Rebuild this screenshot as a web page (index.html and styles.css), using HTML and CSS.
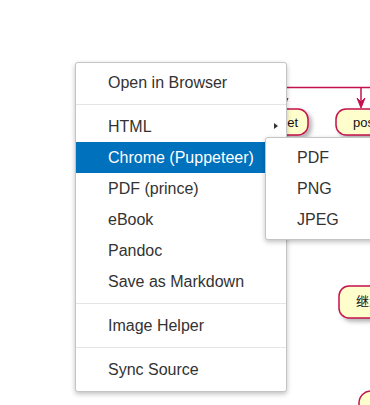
FILE: index.html
```html
<!DOCTYPE html>
<html lang="en">
<head>
    <meta charset="UTF-8">
    <title>Context Menu</title>
    <link rel="stylesheet" href="styles.css">
</head>
<body>
    <div class="canvas">
        <!-- diagram behind the menu -->
        <svg class="diagram" width="370" height="405" viewBox="0 0 370 405">
            <defs>
                <filter id="shadow" x="-20%" y="-20%" width="140%" height="160%">
                    <feDropShadow dx="3" dy="3" stdDeviation="2" flood-color="#000" flood-opacity="0.3"/>
                </filter>
            </defs>
            <line x1="200" y1="87.5" x2="370" y2="87.5" class="edge"/>
            <line x1="361" y1="87.5" x2="361" y2="104" class="edge"/>
            <polygon points="357,98 361,108 365,98 361,102" class="head"/>
            <line x1="284" y1="87.5" x2="284" y2="104" class="edge"/>
            <polygon points="280,98 284,108 288,98 284,102" class="head"/>

            <rect x="200" y="109" width="108" height="26" rx="10" class="node" filter="url(#shadow)"/>
            <text x="298" y="127" text-anchor="end" class="label">get</text>

            <rect x="336" y="109" width="80" height="26" rx="10" class="node" filter="url(#shadow)"/>
            <text x="353" y="127" class="label">post</text>

            <rect x="339" y="286" width="80" height="32" rx="10" class="node" filter="url(#shadow)"/>
            <text x="356" y="306" class="label cjk">继承</text>

            <rect x="359" y="391" width="60" height="30" rx="12" class="node"/>
        </svg>

        <ul class="menu">
            <li class="menu-item">Open in Browser</li>
            <li class="divider"></li>
            <li class="menu-item has-sub">HTML</li>
            <li class="menu-item has-sub active">
                Chrome (Puppeteer)
                <ul class="menu submenu">
                    <li class="menu-item">PDF</li>
                    <li class="menu-item">PNG</li>
                    <li class="menu-item">JPEG</li>
                </ul>
            </li>
            <li class="menu-item">PDF (prince)</li>
            <li class="menu-item">eBook</li>
            <li class="menu-item">Pandoc</li>
            <li class="menu-item">Save as Markdown</li>
            <li class="divider"></li>
            <li class="menu-item">Image Helper</li>
            <li class="divider"></li>
            <li class="menu-item">Sync Source</li>
        </ul>
    </div>
</body>
</html>
```

FILE: styles.css
```css
body {
    margin: 0;
    background-color: #ffffff;
    font-family: 'Liberation Sans', Arial, sans-serif;
}

.canvas {
    position: relative;
    width: 370px;
    height: 405px;
    overflow: hidden;
}

.diagram {
    position: absolute;
    left: 0;
    top: 0;
}

.edge {
    stroke: #c4124c;
    stroke-width: 1.5;
}

.head {
    fill: #c4124c;
    stroke: #c4124c;
    stroke-width: 1;
}

.node {
    fill: #fefecd;
    stroke: #c4124c;
    stroke-width: 1.5;
}

.label {
    font-family: 'Liberation Sans', sans-serif;
    font-size: 13px;
    fill: #111111;
}

.label.cjk {
    font-family: 'Noto Sans CJK SC', sans-serif;
    font-size: 13px;
}

/* context menu */
.menu {
    position: absolute;
    left: 75px;
    top: 62px;
    width: 210px;
    margin: 0;
    padding: 4px 0 6px;
    list-style: none;
    background-color: #ffffff;
    border: 1px solid #c4c4c4;
    border-radius: 3px;
    box-shadow: 0 2px 5px rgba(0, 0, 0, 0.25);
}

.menu-item {
    position: relative;
    height: 31px;
    line-height: 31px;
    padding: 0 32px;
    font-size: 16px;
    color: #333333;
    white-space: nowrap;
    cursor: default;
}

.menu-item.has-sub::after {
    content: "";
    position: absolute;
    right: 8px;
    top: 12px;
    border-left: 4px solid #333333;
    border-top: 3.5px solid transparent;
    border-bottom: 3.5px solid transparent;
}

.menu-item.active {
    background-color: #0071bc;
    color: #ffffff;
}

.divider {
    height: 1px;
    margin: 6px 0;
    background-color: #e5e5e5;
}

.submenu {
    left: 189px;
    top: -5px;
    width: 160px;
    padding: 4px 0;
    z-index: 2;
}

.submenu .menu-item {
    padding-left: 31px;
}
```
